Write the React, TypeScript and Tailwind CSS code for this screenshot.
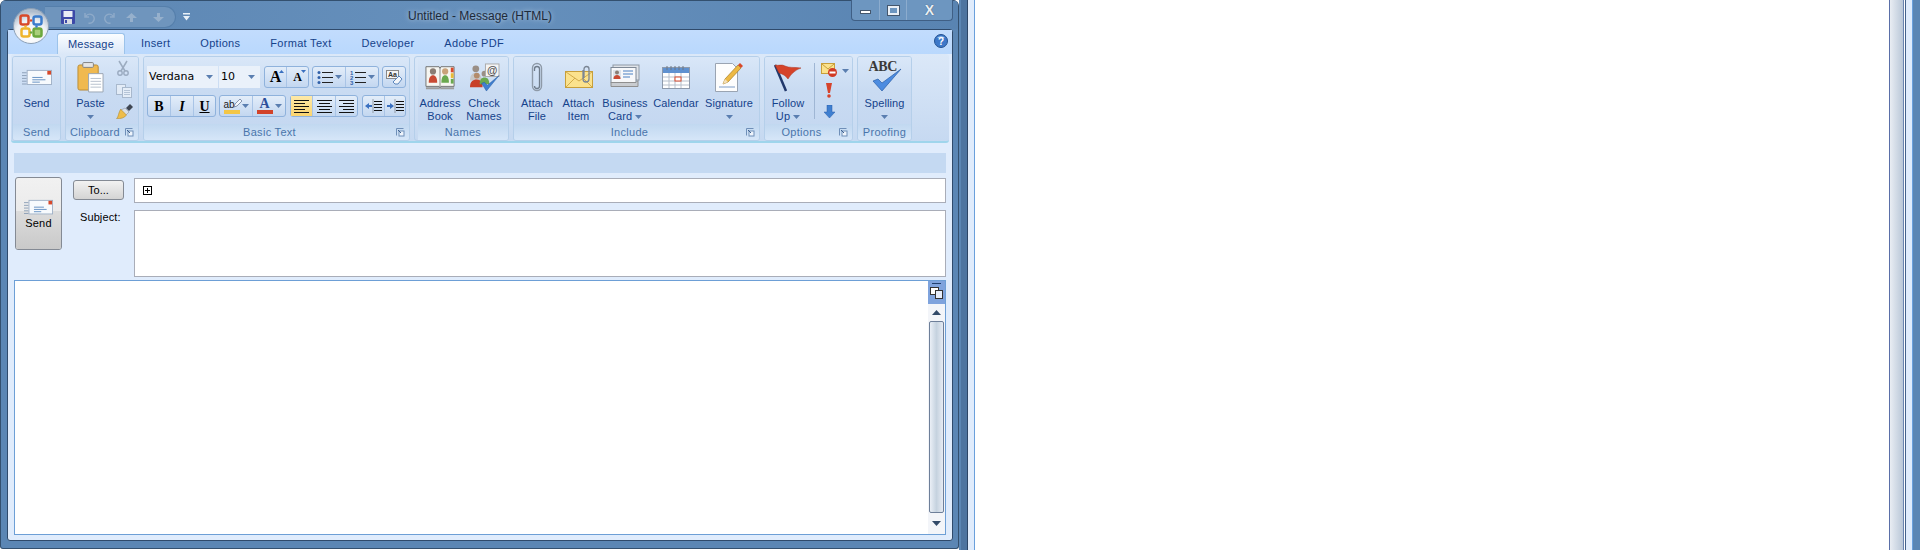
import React from "react";

const TAB = "px-[15px] pt-[5px] text-[11px] leading-[16px] text-[#15428b] tracking-[0.3px]";
const BOX = "flex h-[22px] rounded-[3px] border border-[#8fb2dc] bg-gradient-to-b from-[#e3edf9] via-[#d3e2f5] to-[#c3d7f0]";
const CELL = "flex h-full items-center justify-center border-r border-[#a9c4e6] last:border-r-0";

function Arrow({ className = "" }: { className?: string }) {
  return (
    <svg width="7" height="4" viewBox="0 0 7 4" className={className}>
      <path d="M0 0h7L3.5 4z" fill="#5a7eb0" />
    </svg>
  );
}

function Launcher() {
  return (
    <svg width="10" height="10" viewBox="0 0 10 10" className="absolute right-[4px] top-[3px]">
      <path d="M1.5 8.5v-7h7" fill="none" stroke="#6f8fb8" />
      <rect x="4" y="4" width="5" height="5" fill="#eef4fb" stroke="#6f8fb8" />
      <path d="M3 3l3 3" stroke="#3d5f8f" />
    </svg>
  );
}

function Group({
  title,
  launcher,
  className,
  children,
}: {
  title: string;
  launcher?: boolean;
  className: string;
  children: React.ReactNode;
}) {
  return (
    <div className={`flex h-[85px] flex-col overflow-hidden rounded-[3px] border border-[#b5cfea] ${className}`}>
      <div className="flex h-[68px] bg-gradient-to-b from-[#d9e7f8] via-[#c9dbf2] to-[#c5d8f1]">{children}</div>
      <div
        className={`relative h-[16px] flex-1 bg-gradient-to-b from-[#c1d8f0] to-[#d6e6f8] text-center text-[11px] leading-[17px] tracking-[0.3px] text-[#4a75ab] ${
          launcher ? "pr-[14px]" : ""
        }`}
      >
        {title}
        {launcher && <Launcher />}
      </div>
    </div>
  );
}

function Large({
  icon,
  lines,
  arrow,
  inlineArrow,
  className,
}: {
  icon: React.ReactNode;
  lines: string[];
  arrow?: boolean;
  inlineArrow?: boolean;
  className: string;
}) {
  return (
    <div className={`flex flex-col items-center text-[11px] leading-[13px] tracking-[0.1px] text-[#15428b] ${className}`}>
      <div className="flex h-[40px] items-center justify-center">{icon}</div>
      {lines.map((l, i) => (
        <div key={l} className="flex items-center gap-[3px] whitespace-nowrap">
          {l}
          {inlineArrow && i === lines.length - 1 && <Arrow />}
        </div>
      ))}
      {arrow && <Arrow className="mt-[5px]" />}
    </div>
  );
}

function MailIcon({ w = 30 }: { w?: number }) {
  return (
    <svg width={w} height={(w * 18) / 32} viewBox="0 0 32 18">
      <path d="M0 4h5M0 7h5M0 10h5M0 13h5M0 16h5" stroke="#8a9db5" />
      <rect x="5.5" y="1.5" width="26" height="15" fill="#f7fafd" stroke="#9fb0c6" />
      <rect x="27" y="2" width="4" height="4" fill="#d8492a" />
      <path d="M11 9h11M11 11.5h14M11 14h8" stroke="#5f8cc0" />
    </svg>
  );
}

function PasteIcon() {
  return (
    <svg width="27" height="31" viewBox="0 0 28 32">
      <rect x="1" y="3" width="21" height="26" rx="2" fill="#f0b94f" stroke="#b98b35" />
      <rect x="6" y="0.5" width="11" height="5" rx="1" fill="#e6e6e6" stroke="#808080" />
      <path d="M12 12h15v19H12z" fill="#fff" stroke="#9aa4b2" />
      <path d="M14 17h11M14 20h11M14 23h11M14 26h11" stroke="#b6bfcc" />
    </svg>
  );
}

function CutIcon() {
  return (
    <svg width="14" height="16" viewBox="0 0 14 16" opacity="0.55">
      <path d="M3 1l6 10M11 1L5 11" stroke="#6e7f94" strokeWidth="1.5" />
      <circle cx="4" cy="13" r="2.2" fill="none" stroke="#6e7f94" strokeWidth="1.4" />
      <circle cx="10" cy="13" r="2.2" fill="none" stroke="#6e7f94" strokeWidth="1.4" />
    </svg>
  );
}

function CopyIcon() {
  return (
    <svg width="16" height="14" viewBox="0 0 16 14" opacity="0.6">
      <rect x="0.5" y="0.5" width="9" height="10" fill="#f3f6fa" stroke="#93a2b5" />
      <rect x="6.5" y="3.5" width="9" height="10" fill="#f8fafc" stroke="#93a2b5" />
      <path d="M8 6.5h6M8 8.5h6M8 10.5h6" stroke="#a9b6c6" />
    </svg>
  );
}

function BrushIcon() {
  return (
    <svg width="17" height="15" viewBox="0 0 17 15">
      <path d="M10 4l4-4 3 3-4 4z" fill="#3f4652" />
      <path d="M9 4l4 4-3 3-5-5z" fill="#d8dfe8" stroke="#828b99" strokeWidth="0.5" />
      <path d="M5 5.500L10.500 11c-2 3-6 4-10 3.500 2-1 2-7 4.500-9.500z" fill="#eebd4a" stroke="#a98324" strokeWidth="0.5" />
    </svg>
  );
}

function AddressBookIcon() {
  return (
    <svg width="30" height="28" viewBox="0 0 32 28">
      <path d="M1 24V3h14l1 2 1-2h14v21H17l-1 2-1-2z" fill="#f6f6f1" stroke="#6f6f6f" />
      <path d="M16 5v20" stroke="#888" />
      <rect x="27.500" y="4" width="3" height="5" fill="#d8492a" />
      <rect x="27.500" y="10" width="3" height="5" fill="#e8bb35" />
      <rect x="27.500" y="16" width="3" height="5" fill="#6aa84f" />
      <circle cx="8.500" cy="8" r="3.300" fill="#8a7d74" />
      <path d="M4 20c0-6 2-8 4.500-8s4.500 2 4.500 8z" fill="#c94a33" />
      <circle cx="21.500" cy="8" r="3.300" fill="#c9a27a" />
      <path d="M17.500 20c0-6 1.500-8 4-8s4 2 4 8z" fill="#6aa84f" />
      <path d="M1 25h14l1 2 1-2h14v2H1z" fill="#9c9c9c" />
    </svg>
  );
}

function CheckNamesIcon() {
  return (
    <svg width="31" height="29" viewBox="0 0 32 30">
      <circle cx="7" cy="6" r="3.500" fill="#9a8f86" />
      <path d="M1 18c0-6 3-8 6-8s6 2 6 8z" fill="#c7c7c7" />
      <circle cx="8" cy="13" r="3" fill="#b38b6a" />
      <path d="M1 25c0-6 3-8 7-8s6 3 6 8z" fill="#c83f28" />
      <circle cx="16" cy="11" r="3" fill="#9a8f86" />
      <path d="M11 22c0-5 2-7 5-7s5 2 5 7z" fill="#6aa84f" />
      <rect x="17" y="1" width="14" height="13" fill="#f4f4f4" stroke="#aaa" />
      <text x="24" y="11.500" textAnchor="middle" fontSize="11" fontWeight="700" fill="#555" fontFamily="Liberation Sans">@</text>
      <path d="M13 21l5 8L31 13l-12 10-3-3z" fill="#3f7fd0" stroke="#245a9e" strokeWidth="0.5" />
    </svg>
  );
}

function ClipIcon() {
  return (
    <svg width="12" height="30" viewBox="0 0 12 30">
      <path d="M3.500 9V7a2.500 2.500 0 0 1 5 0v17a2.500 2.500 0 0 1-5 0" fill="none" stroke="#6f7c8b" strokeWidth="1.300" />
      <path d="M10.500 8v16a4.500 4.500 0 0 1-9 0V6a4.500 4.500 0 0 1 9 0z" fill="none" stroke="#8e9aa8" strokeWidth="1.400" />
    </svg>
  );
}

function AttachItemIcon() {
  return (
    <svg width="28" height="24" viewBox="0 0 28 24">
      <rect x="0.500" y="6.500" width="27" height="16" fill="#fbe28d" stroke="#c89f3a" />
      <path d="M1 7l13 9 13-9M1 22l9-9M27 22l-9-9" fill="none" stroke="#d2ab4a" />
      <path d="M19 13V4a2.500 2.500 0 0 1 5 0v10a3 3 0 0 1-6 0V5" fill="none" stroke="#7b8694" strokeWidth="1.300" />
    </svg>
  );
}

function CardIcon() {
  return (
    <svg width="30" height="26" viewBox="0 0 30 26">
      <rect x="3" y="1" width="26" height="15" fill="#dfe3e8" stroke="#8f99a5" />
      <rect x="1" y="3.500" width="25" height="15" fill="#f7f8fa" stroke="#7f8996" />
      <rect x="3" y="6" width="8" height="9" fill="#dde3ea" />
      <circle cx="7" cy="8.500" r="2" fill="#8a7d74" />
      <path d="M3.500 15c0-3 1.500-4 3.500-4s3.500 1 3.500 4z" fill="#c94a33" />
      <path d="M13 7h10M13 10h10M13 13h7" stroke="#4a80c2" />
      <path d="M1 18.500h25l2-2v6H1z" fill="#c9ccd0" stroke="#8f8f8f" />
    </svg>
  );
}

function CalendarIcon() {
  return (
    <svg width="28" height="24" viewBox="0 0 28 24">
      <rect x="0.500" y="2.500" width="27" height="21" fill="#fff" stroke="#8e9aab" />
      <rect x="1" y="3" width="26" height="5" fill="#5f91d0" />
      <path d="M5 1v4M9 1v4M13 1v4M17 1v4M21 1v4" stroke="#6b7686" />
      <path d="M1 12h26M1 16h26M1 20h26M7 8v15M13 8v15M19 8v15" stroke="#b7c0cc" />
      <rect x="13" y="12" width="6" height="4" fill="#fff" stroke="#d8492a" />
    </svg>
  );
}

function SignatureIcon() {
  return (
    <svg width="28" height="30" viewBox="0 0 28 30">
      <path d="M0.500 1.500h17l5 5v23H0.500z" fill="#fdfdfd" stroke="#9aa4b2" />
      <path d="M4 25h16" stroke="#7d9cc7" />
      <path d="M8 22l2-5L23 3l3 3-13 14z" fill="#edb944" stroke="#a67d22" strokeWidth="0.700" />
      <path d="M23 3l2-2 3 3-2 2z" fill="#d8492a" />
      <path d="M8 22l2-5 3 3z" fill="#f4dfb8" />
    </svg>
  );
}

function FlagIcon() {
  return (
    <svg width="28" height="30" viewBox="0 0 28 30">
      <path d="M1 3l11 26" stroke="#21386b" strokeWidth="2.500" />
      <path d="M1 3c4 1 7-1 10 1 4 2 9 1 16 2-6 2-10 6-13 11-2-3-5-5-9-6z" fill="#d5432a" stroke="#a8331f" strokeWidth="0.500" />
    </svg>
  );
}

function SmallMailStopIcon() {
  return (
    <svg width="17" height="15" viewBox="0 0 17 15">
      <rect x="0.500" y="0.500" width="13" height="10" fill="#fbe28d" stroke="#c89f3a" />
      <path d="M1 1l6 5 6-5" fill="none" stroke="#c89f3a" />
      <circle cx="11.500" cy="9.500" r="4.500" fill="#d13a25" />
      <rect x="8.500" y="8.500" width="6" height="2" fill="#fff" />
    </svg>
  );
}

function SpellIcon() {
  return (
    <div className="relative h-[32px] w-[32px]">
      <span className="absolute left-0 top-[-2px] font-['Liberation_Serif',serif] text-[14px] font-bold leading-[16px] tracking-[-0.3px] text-[#3a3a3a]">
        ABC
      </span>
      <svg width="30" height="24" viewBox="0 0 30 24" className="absolute left-[3px] top-[7px]">
        <path d="M1 13l9 10L29 1 10 15l-4-4z" fill="#4d8ce0" stroke="#2a5ea8" strokeWidth="0.700" />
      </svg>
    </div>
  );
}

function ListIcon({ numbered }: { numbered?: boolean }) {
  return (
    <svg width="16" height="15" viewBox="0 0 16 15">
      {numbered ? (
        <g fontSize="6" fontWeight="700" fill="#2f5fa8" fontFamily="Liberation Sans">
          <text x="0" y="5">1</text>
          <text x="0" y="10">2</text>
          <text x="0" y="15">3</text>
        </g>
      ) : (
        <>
          <circle cx="2" cy="2.500" r="1.500" fill="#2f5fa8" />
          <circle cx="2" cy="7.500" r="1.500" fill="#2f5fa8" />
          <circle cx="2" cy="12.500" r="1.500" fill="#2f5fa8" />
        </>
      )}
      <path d="M5 2.500h11M5 7.500h11M5 12.500h11" stroke="#222" />
    </svg>
  );
}

function AlignIcon({ kind }: { kind: "left" | "center" | "right" }) {
  const d = {
    left: "M0 .5h15M0 3.500h11M0 6.500h15M0 9.500h11M0 12.500h15",
    center: "M0 .5h15M2 3.500h11M0 6.500h15M2 9.500h11M0 12.500h15",
    right: "M0 .5h15M4 3.500h11M0 6.500h15M4 9.500h11M0 12.500h15",
  }[kind];
  return (
    <svg width="15" height="13" viewBox="0 0 15 13">
      <path d={d} stroke="#111" />
    </svg>
  );
}

function IndentIcon({ out }: { out?: boolean }) {
  return (
    <svg width="17" height="15" viewBox="0 0 17 15">
      <path d="M8 .5v14" stroke="#555" strokeDasharray="1 1" />
      <path d="M9 2.500h8M9 5.500h8M9 8.500h8M9 11.500h8" stroke="#111" />
      {out ? (
        <path d="M0 7l4-3v2h3v2H4v2z" fill="#3a70c0" />
      ) : (
        <path d="M7 7L3 4v2H0v2h3v2z" fill="#3a70c0" />
      )}
    </svg>
  );
}

function OfficeButton() {
  return (
    <svg width="36" height="36" viewBox="0 0 36 36" className="absolute left-[12px] top-[8px]">
      <defs>
        <radialGradient id="orb" cx="50%" cy="78%" r="70%">
          <stop offset="0%" stopColor="#ffffff" />
          <stop offset="65%" stopColor="#eef1f5" />
          <stop offset="100%" stopColor="#aebccc" />
        </radialGradient>
      </defs>
      <circle cx="18" cy="18" r="17.500" fill="url(#orb)" stroke="#8b9fb6" />
      <rect x="7.500" y="7.500" width="8" height="9" rx="2" fill="none" stroke="#d8492a" strokeWidth="2.500" />
      <rect x="20.500" y="8.500" width="8" height="8" rx="2" fill="none" stroke="#3b7ccc" strokeWidth="2.500" />
      <rect x="8.500" y="20.500" width="8" height="8" rx="2" fill="none" stroke="#efb52c" strokeWidth="2.500" />
      <rect x="20.500" y="20.500" width="8" height="8" rx="2" fill="#a9cf7b" stroke="#6ca83e" strokeWidth="2.500" />
      <circle cx="18" cy="12.500" r="1.200" fill="#d8492a" />
      <circle cx="12.500" cy="18.500" r="1.200" fill="#efb52c" />
      <circle cx="23.500" cy="18.500" r="1.200" fill="#3b7ccc" />
      <circle cx="18" cy="24.500" r="1.200" fill="#6ca83e" />
    </svg>
  );
}

function TitleBar() {
  return (
    <div className="relative h-[29px] border-t border-[#33506f] bg-gradient-to-r from-[#5c86b3] via-[#6690bc] to-[#5984b2]">
      {/* quick access pill */}
      <div className="absolute left-[44px] top-[5px] flex h-[22px] w-[131px] items-center gap-[7px] rounded-r-[12px] border border-l-0 border-[#557fab] bg-[#6f95bd] pl-[16px]">
        <svg width="14" height="14" viewBox="0 0 14 14">
          <rect width="14" height="14" rx="1" fill="#3d49a8" />
          <rect x="2.500" y="1" width="9" height="6" fill="#e9edf6" />
          <rect x="3" y="9" width="8" height="5" fill="#d8dbe3" />
          <rect x="4" y="10" width="2" height="3" fill="#3d49a8" />
        </svg>
        <svg width="13" height="13" viewBox="0 0 13 13" opacity="0.55">
          <path d="M3 2v4h4M3.500 6a4.500 4.500 0 1 1 3 6" fill="none" stroke="#a7bcd3" strokeWidth="1.500" />
        </svg>
        <svg width="13" height="13" viewBox="0 0 13 13" opacity="0.55" className="ml-[2px]">
          <path d="M10 2v4H6M9.500 6a4.500 4.500 0 1 0-3 6" fill="none" stroke="#a7bcd3" strokeWidth="1.500" />
        </svg>
        <svg width="11" height="9" viewBox="0 0 11 9" opacity="0.7" className="ml-[2px]">
          <path d="M5.500 0L11 5H7v4H4V5H0z" fill="#a7bcd3" />
        </svg>
        <svg width="11" height="9" viewBox="0 0 11 9" opacity="0.7" className="ml-[9px]">
          <path d="M5.500 9L11 4H7V0H4v4H0z" fill="#a7bcd3" />
        </svg>
      </div>
      <svg width="7" height="8" viewBox="0 0 7 8" className="absolute left-[182px] top-[12px]">
        <path d="M0 0h7v1.500H0zM0 3h7L3.500 7.500z" fill="#e8f0f8" />
      </svg>
      <div className="absolute left-[407px] top-[7px] text-[12px] leading-[16px] text-[#1d2a3a] [text-shadow:0_0_5px_#c7d8ea]">
        Untitled - Message (HTML)
      </div>
      {/* window buttons */}
      <div className="absolute left-[850px] top-[-1px] flex h-[21px] w-[102px] overflow-hidden rounded-b-[4px] border border-t-0 border-[#3f5f85] bg-[#6d96c0]">
        <div className="flex w-[28px] items-center justify-center border-r border-[#8cacce]">
          <div className="mt-[4px] h-[4px] w-[11px] border border-[#44566c] bg-white" />
        </div>
        <div className="flex w-[27px] items-center justify-center border-r border-[#8cacce]">
          <div className="h-[9px] w-[11px] border-2 border-[#e9eff6] outline outline-1 outline-[#44566c]" />
        </div>
        <div className="flex flex-1 items-center justify-center font-['Liberation_Sans',sans-serif] text-[14px] font-bold leading-none text-[#e9eff6] [text-shadow:0_0_1px_#33465c]">
          X
        </div>
      </div>
    </div>
  );
}

function Tabs() {
  return (
    <div className="relative flex h-[24px] bg-gradient-to-b from-[#c2dcfd] to-[#b9d8fd] pl-[49px]">
      <div className="mt-[3px] h-[21px] w-[68px] rounded-t-[3px] border border-b-0 border-[#9cc3ea] bg-gradient-to-b from-[#fbfdff] to-[#dbe8f8] pt-[2px] text-center text-[11px] leading-[16px] tracking-[0.2px] text-[#15428b]">
        Message
      </div>
      <div className={`ml-px ${TAB}`}>Insert</div>
      <div className={TAB}>Options</div>
      <div className={TAB}>Format Text</div>
      <div className={TAB}>Developer</div>
      <div className={TAB}>Adobe PDF</div>
      <svg width="14" height="14" viewBox="0 0 14 14" className="absolute left-[926px] top-[4px]">
        <circle cx="7" cy="7" r="6.500" fill="#3d78c9" stroke="#245291" />
        <path d="M3 4a4.500 3 0 0 1 8 0z" fill="#a7cbf2" />
        <text x="7" y="10.500" textAnchor="middle" fontSize="10" fontWeight="700" fill="#fff" fontFamily="Liberation Sans">?</text>
      </svg>
    </div>
  );
}

function Ribbon() {
  return (
    <div className="mx-[3px] flex h-[89px] gap-[4px] rounded-[3px] border-b-2 border-[#9fd5ec] bg-gradient-to-b from-[#dbe8f8] to-[#c6d9f1] pl-[1px] pt-[2px]">
      <Group title="Send" className="w-[49px]">
        <Large className="w-full" icon={<MailIcon />} lines={["Send"]} />
      </Group>

      <Group title="Clipboard" launcher className="w-[74px]">
        <Large className="w-[49px]" icon={<PasteIcon />} lines={["Paste"]} arrow />
        <div className="flex flex-col items-start gap-[6px] pl-[1px] pt-[3px]">
          <CutIcon />
          <div className="pt-[2px]"><CopyIcon /></div>
          <BrushIcon />
        </div>
      </Group>

      <Group title="Basic Text" launcher className="w-[267px]">
        <div className="flex flex-col gap-[7px] pl-[3px] pt-[9px] text-black">
          <div className="flex">
            <div className="flex h-[22px] w-[71px] items-center justify-between bg-[#eaf1fa] pl-[2px] pr-[5px] font-['DejaVu_Sans',sans-serif] text-[11px]">
              Verdana <Arrow />
            </div>
            <div className="ml-[1px] flex h-[22px] w-[41px] items-center justify-between bg-[#eaf1fa] pl-[2px] pr-[5px] font-['DejaVu_Sans',sans-serif] text-[11px]">
              10 <Arrow />
            </div>
            <div className={`ml-[4px] w-[45px] ${BOX}`}>
              <div className={`relative w-[22px] font-['Liberation_Serif',serif] text-[16px] font-bold ${CELL}`}>
                A
                <svg width="5" height="3" viewBox="0 0 5 3" className="absolute right-[2px] top-[3px]"><path d="M2.500 0L5 3H0z" fill="#3a70c0" /></svg>
              </div>
              <div className={`relative w-[21px] font-['Liberation_Serif',serif] text-[12px] font-bold ${CELL}`}>
                A
                <svg width="5" height="3" viewBox="0 0 5 3" className="absolute right-[2px] top-[3px]"><path d="M2.500 3L5 0H0z" fill="#3a70c0" /></svg>
              </div>
            </div>
            <div className={`ml-[3px] w-[67px] ${BOX}`}>
              <div className={`w-[33px] gap-[2px] ${CELL}`}><ListIcon /><Arrow /></div>
              <div className={`w-[32px] gap-[2px] ${CELL}`}><ListIcon numbered /><Arrow /></div>
            </div>
            <div className={`ml-[3px] w-[24px] ${BOX}`}>
              <div className={`w-full ${CELL}`}>
                <svg width="17" height="15" viewBox="0 0 17 15">
                  <rect x="0.500" y="0.500" width="12" height="8" fill="#f5f5f5" stroke="#888" />
                  <text x="6.500" y="7" textAnchor="middle" fontSize="7" fontWeight="700" fill="#333" fontFamily="Liberation Sans">Aa</text>
                  <path d="M7 12l6-6 3 3-4 5H9z" fill="#f3f6fa" stroke="#5b86bd" />
                </svg>
              </div>
            </div>
          </div>
          <div className="flex">
            <div className={`w-[69px] font-['Liberation_Serif',serif] text-[14px] ${BOX}`}>
              <div className={`w-[23px] font-bold ${CELL}`}>B</div>
              <div className={`w-[23px] font-bold italic ${CELL}`}>I</div>
              <div className={`w-[21px] font-bold underline ${CELL}`}>U</div>
            </div>
            <div className={`ml-[3px] w-[67px] ${BOX}`}>
              <div className={`w-[33px] gap-[2px] ${CELL}`}>
                <div className="relative flex flex-col items-start text-[10px] leading-[11px] text-[#1c1c1c]">
                  ab
                  <svg width="9" height="9" viewBox="0 0 9 9" className="absolute left-[9px] top-0"><path d="M1 8l1-3 5-5 2 2-5 5z" fill="#f3f6fa" stroke="#5b6f8f" strokeWidth="0.700" /></svg>
                  <div className="h-[4px] w-[16px] bg-[#f3c646]" />
                </div>
                <Arrow />
              </div>
              <div className={`w-[32px] gap-[2px] ${CELL}`}>
                <div className="flex flex-col items-center font-['Liberation_Serif',serif] text-[14px] font-bold leading-[12px] text-[#2d4f9a]">
                  A
                  <div className="h-[4px] w-[16px] bg-[#d2432a]" />
                </div>
                <Arrow />
              </div>
            </div>
            <div className={`ml-[4px] w-[68px] ${BOX}`}>
              <div className={`w-[22px] bg-gradient-to-b from-[#fde9a8] to-[#fbd46e] ${CELL}`}><AlignIcon kind="left" /></div>
              <div className={`w-[23px] ${CELL}`}><AlignIcon kind="center" /></div>
              <div className={`w-[21px] ${CELL}`}><AlignIcon kind="right" /></div>
            </div>
            <div className={`ml-[4px] w-[44px] ${BOX}`}>
              <div className={`w-[22px] ${CELL}`}><IndentIcon out /></div>
              <div className={`w-[20px] ${CELL}`}><IndentIcon /></div>
            </div>
          </div>
        </div>
      </Group>

      <Group title="Names" className="w-[95px] pl-[3px]">
        <Large className="w-[44px]" icon={<AddressBookIcon />} lines={["Address", "Book"]} />
        <Large className="w-[44px]" icon={<CheckNamesIcon />} lines={["Check", "Names"]} />
      </Group>

      <Group title="Include" launcher className="w-[247px]">
        <div className="flex pl-[3px]">
          <Large className="w-[40px]" icon={<ClipIcon />} lines={["Attach", "File"]} />
          <Large className="w-[43px]" icon={<AttachItemIcon />} lines={["Attach", "Item"]} />
          <Large className="w-[50px]" icon={<CardIcon />} lines={["Business", "Card"]} inlineArrow />
          <Large className="w-[52px]" icon={<CalendarIcon />} lines={["Calendar"]} />
          <Large className="w-[54px]" icon={<SignatureIcon />} lines={["Signature"]} arrow />
        </div>
      </Group>

      <Group title="Options" launcher className="w-[89px]">
        <Large className="ml-[1px] w-[44px]" icon={<FlagIcon />} lines={["Follow", "Up"]} inlineArrow />
        <div className="ml-[4px] mt-[6px] h-[56px] w-px bg-[#9fb6d4]" />
        <div className="ml-[6px] flex flex-col items-start gap-[5px] pt-[6px]">
          <div className="flex items-center gap-[4px]">
            <SmallMailStopIcon />
            <Arrow />
          </div>
          <svg width="6" height="15" viewBox="0 0 6 15" className="ml-[5px]">
            <path d="M0 0h6L4 10H2z" fill="#d6432b" />
            <circle cx="3" cy="13" r="1.800" fill="#d6432b" />
          </svg>
          <svg width="11" height="13" viewBox="0 0 11 13" className="ml-[3px] mt-[2px]">
            <path d="M3 0h5v7h3l-5.500 6L0 7h3z" fill="#3f7fd0" stroke="#2a5ea8" strokeWidth="0.500" />
          </svg>
        </div>
      </Group>

      <Group title="Proofing" className="w-[55px]">
        <Large className="w-full" icon={<SpellIcon />} lines={["Spelling"]} arrow />
      </Group>
    </div>
  );
}

function Header() {
  return (
    <div className="flex pl-[7px] pr-[6px] pt-[4px] text-[11px] text-black">
      <div className="h-[73px] w-[47px] shrink-0 overflow-hidden rounded-[3px] border border-[#848a94] bg-gradient-to-b from-[#f1f1f1] to-[#e4e4e4]">
        <div className="h-[33px] pl-[8px] pt-[21px]">
          <div className="relative z-10"><MailIcon w={29} /></div>
        </div>
        <div className="h-[38px] bg-gradient-to-b from-[#dcdcdc] to-[#c9c9c9] text-center leading-[25px] tracking-[0.2px]">Send</div>
      </div>
      <div className="ml-[11px] w-[51px] shrink-0">
        <div className="mt-[3px] flex h-[20px] items-center justify-center rounded-[3px] border border-[#848a94] bg-gradient-to-b from-[#f2f2f2] to-[#d4d4d4]">
          To...
        </div>
        <div className="mt-[9px] pl-[7px] leading-[16px] tracking-[0.1px] whitespace-nowrap">Subject:</div>
      </div>
      <div className="ml-[10px] flex-1 pt-px">
        <div className="flex h-[25px] items-center border border-[#a9adb8] bg-white pl-[8px]">
          <svg width="9" height="9" viewBox="0 0 9 9">
            <rect x="0.500" y="0.500" width="8" height="8" fill="none" stroke="#000" />
            <path d="M4.500 2v5M2 4.500h5" stroke="#000" />
          </svg>
        </div>
        <div className="mt-[7px] h-[67px] border border-[#a9adb8] bg-white" />
      </div>
    </div>
  );
}

function Body() {
  return (
    <div className="mx-[6px] mt-[3px] flex h-[255px] border border-[#6d9fd6] bg-white">
      <div className="flex-1" />
      <div className="flex w-[17px] flex-col bg-[#f3f5f9]">
        <div className="flex h-[23px] flex-col items-center bg-[#7fa3dd] pt-[2px]">
          <div className="h-[1px] w-[9px] bg-[#1f3f6e]" />
          <svg width="13" height="12" viewBox="0 0 13 12" className="mt-[3px]">
            <rect x="0.500" y="0.500" width="8" height="7" fill="#fff" stroke="#333" />
            <rect x="5.500" y="3.500" width="7" height="8" fill="#e7eefb" stroke="#333" />
          </svg>
        </div>
        <div className="flex h-[17px] items-center justify-center">
          <svg width="9" height="5" viewBox="0 0 9 5"><path d="M4.500 0L9 5H0z" fill="#324a68" /></svg>
        </div>
        <div className="mx-[1px] h-[192px] rounded-[2px] border border-[#6e7f99] bg-gradient-to-r from-[#eaeff6] via-[#c5d2df] to-[#e6ebf3]" />
        <div className="flex flex-1 items-center justify-center">
          <svg width="9" height="5" viewBox="0 0 9 5"><path d="M4.500 5L9 0H0z" fill="#324a68" /></svg>
        </div>
      </div>
    </div>
  );
}

export default function App() {
  return (
    <div className="flex h-[550px] w-[1920px] overflow-hidden bg-white font-['Liberation_Sans',sans-serif]">
      {/* message window */}
      <div className="relative h-[549px] w-[959px] shrink-0 overflow-hidden rounded-t-[6px] rounded-b-[3px] border-x border-b border-[#33506f] bg-[#5b86b4]">
        <TitleBar />
        <div className="ml-[6px] mr-[5px] h-[512px] rounded-[3px] border border-[#2f4a6b] bg-[#e0ecfc]">
          <Tabs />
          <Ribbon />
          <div className="mx-[6px] mt-[10px] h-[20px] bg-[#c4d9f2]" />
          <Header />
          <Body />
        </div>
        <OfficeButton />
      </div>
      {/* window behind */}
      <div className="flex h-[550px] shrink-0">
        <div className="w-[2px] bg-[#5b86b4]" />
        <div className="w-[6px] bg-[#4d74a0]" />
        <div className="w-px bg-[#2c4566]" />
        <div className="w-[6px] bg-[#e0ecfc]" />
        <div className="w-px bg-[#6aa0dc]" />
      </div>
      <div className="flex-1" />
      <div className="flex h-[550px] shrink-0">
        <div className="w-px bg-[#5a6fa8]" />
        <div className="w-[13px] bg-gradient-to-r from-[#e9edf3] to-[#b9c7d8]" />
        <div className="w-px bg-[#6a84b0]" />
        <div className="w-px bg-white" />
        <div className="w-px bg-[#44628c]" />
        <div className="w-[6px] bg-[#e0ecfc]" />
        <div className="w-px bg-[#6aa0dc]" />
        <div className="w-[7px] bg-[#5b86b4]" />
      </div>
    </div>
  );
}
